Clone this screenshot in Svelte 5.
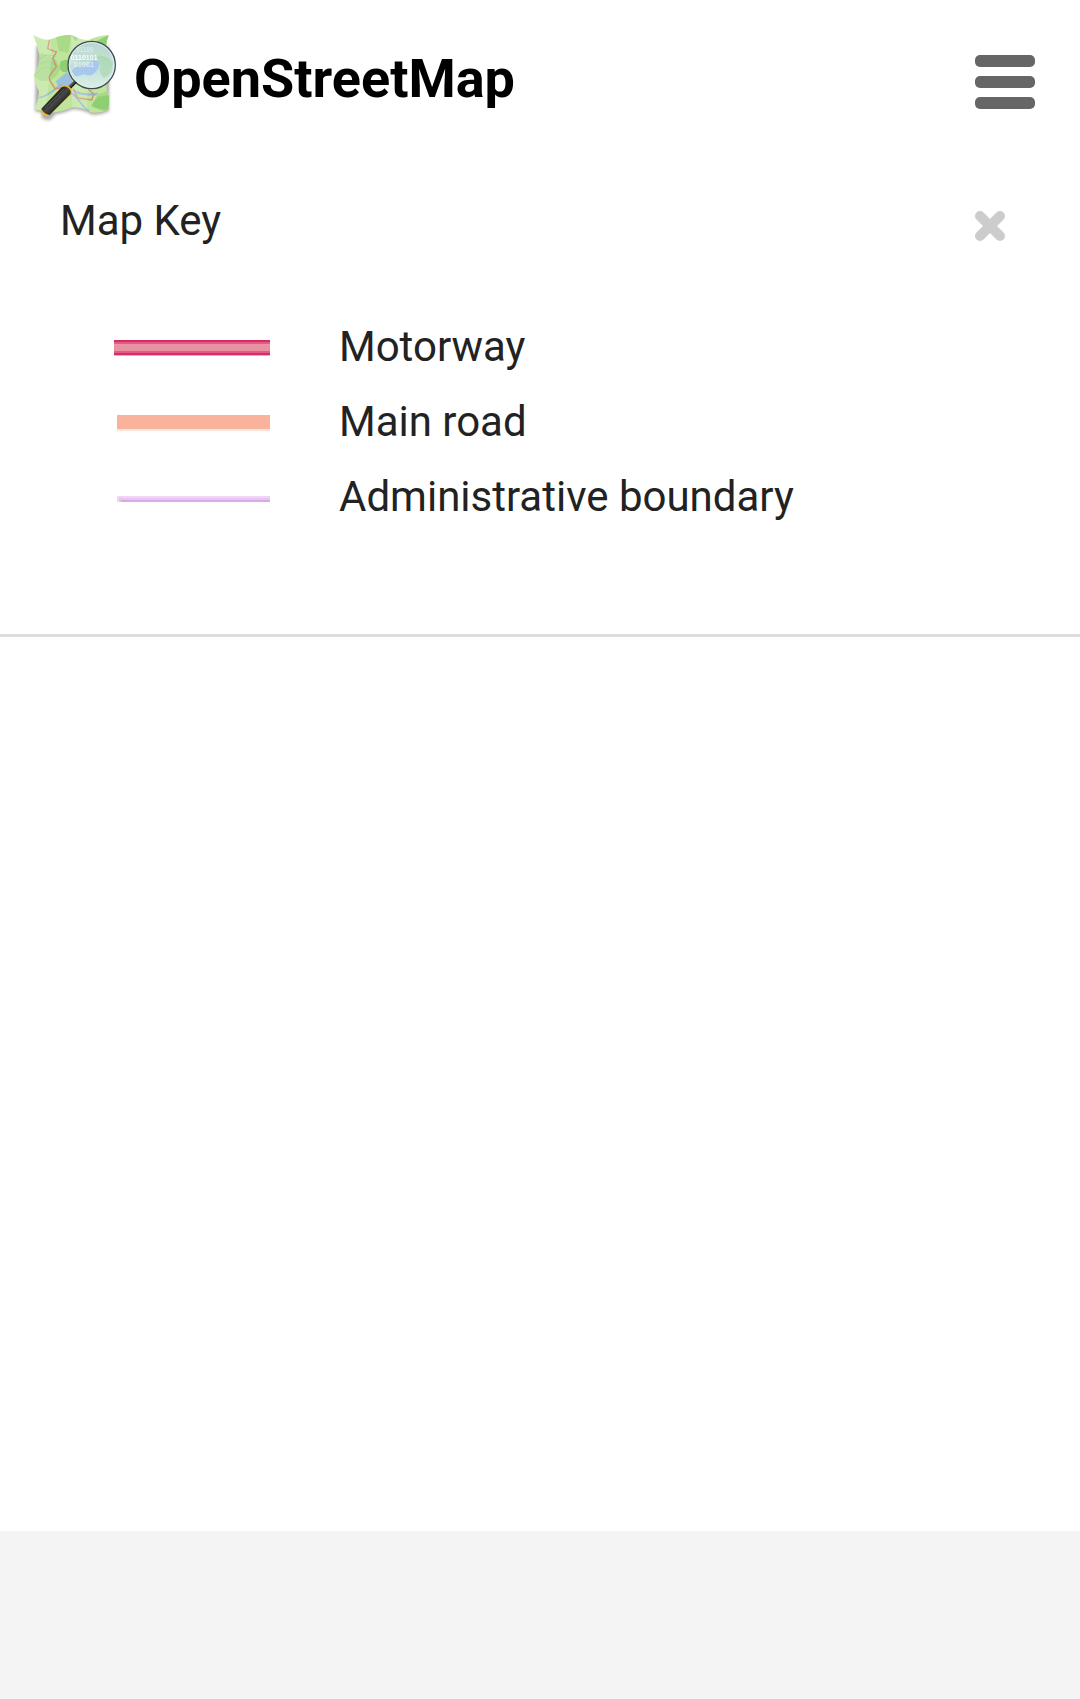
<script>
  const entries = [
    { label: 'Motorway', kind: 'motorway' },
    { label: 'Main road', kind: 'main' },
    { label: 'Administrative boundary', kind: 'admin' }
  ];
  let open = $state(true);
</script>

<div class="page">
  <header>
    <h1>
      <a href="/">
        <svg class="logo" viewBox="15 24 270 270" aria-hidden="true">
          <defs>
            <clipPath id="sheet">
              <path d="M25 27Q48 42 74 41Q104 27 138 26Q164 42 190 42Q220 28 251 28Q238 58 246 86Q256 120 252 144Q240 178 248 200Q258 224 248 252Q226 262 202 260Q172 244 144 244Q110 258 80 260Q54 256 27 250Q42 222 42 196Q28 168 28 146Q44 116 44 90Q38 58 25 27Z" />
            </clipPath>
            <linearGradient id="glass" x1="0" y1="0" x2="0" y2="1">
              <stop offset="0" stop-color="#a3c9c3" />
              <stop offset="0.5" stop-color="#bfdedb" />
              <stop offset="1" stop-color="#dcf0ea" />
            </linearGradient>
            <linearGradient id="grip" x1="0" y1="0" x2="1" y2="1">
              <stop offset="0.3" stop-color="#111" />
              <stop offset="0.5" stop-color="#484848" />
              <stop offset="0.7" stop-color="#1c1c1c" />
            </linearGradient>
            <filter id="soft" x="-20%" y="-20%" width="140%" height="140%">
              <feGaussianBlur stdDeviation="5" />
            </filter>
          </defs>
          <g filter="url(#soft)" fill="#666" opacity="0.55">
            <path d="M34 60L250 60Q262 120 252 150L252 256Q226 268 202 266Q172 250 144 250Q110 264 80 266L30 256Z" />
            <path d="M50 262L120 200L144 204L76 282Q62 284 50 276Z" />
          </g>
          <g clip-path="url(#sheet)" fill="none">
            <path fill="#bfe59c" d="M15 20H285V290H15Z" />
            <path fill="#a9da87" d="M27 90Q58 70 94 104Q118 132 82 160Q48 174 27 150ZM90 20L140 20L130 80L102 76ZM198 240L220 205L260 190V265Z" />
            <path fill="#8fcf74" d="M106 107Q130 92 138 116L132 136Q110 144 103 126ZM200 240Q210 208 252 208V252Q226 254 200 240ZM136 20H166L152 46ZM214 46L256 24L246 62Z" />
            <path stroke="#93cc7d" stroke-width="2" d="M38 110Q56 76 92 92M34 124Q60 94 94 118M36 140Q62 112 86 134M150 210Q180 190 224 214" />
            <path fill="#9cbfdc" d="M92 166L126 138L144 164L134 184L104 188Z" />
            <path stroke="#91b6d8" stroke-width="5" d="M42 216Q70 208 92 188L108 176M134 198Q154 210 168 232Q182 250 192 254M144 192Q180 214 218 202" />
            <path stroke="#d58d78" stroke-width="4" d="M74 38L68 68L94 78L84 96L94 122L72 152L74 162L90 188L124 184M144 188L158 216L200 222L206 204L190 190" />
            <path fill="#fff" opacity="0.2" d="M20 20H74L80 90L60 270H20ZM138 20H192L186 270H142Z" />
          </g>
          <circle cx="200" cy="117" r="71" fill="url(#glass)" opacity="0.95" />
          <path fill="#a9d9a8" d="M208 74Q250 84 262 112Q264 150 236 156Q220 140 226 116Z" opacity="0.6" />
          <path fill="#a5c8ec" d="M140 134Q160 110 184 120Q206 98 220 106Q228 124 208 142Q192 154 180 144Q160 152 150 150Z" />
          <g fill="#fff" font-family="Liberation Sans, Arial, sans-serif" font-weight="700">
            <text x="154" y="79" font-size="19" opacity="0.4">01100</text>
            <text x="137" y="102" font-size="21" opacity="0.9">0110101</text>
            <text x="146" y="124" font-size="22" opacity="0.6">01001</text>
          </g>
          <path fill="#fff" opacity="0.2" d="M134 118A66 66 0 0 1 266 108Q224 64 134 118Z" />
          <circle cx="200" cy="117" r="71" fill="none" stroke="#3f4b50" stroke-width="4" />
          <circle cx="200" cy="117" r="67" fill="none" stroke="#e5f1ef" stroke-width="3" opacity="0.8" />
          <path stroke="#555" stroke-width="10" d="M130 187L150 168" />
          <path stroke="#202020" stroke-width="5" d="M134 189L154 168" />
          <path fill="#f0b92c" d="M112 181Q124 174 134 183Q143 192 139 203L70 271Q52 271 46 254Z" />
          <path fill="url(#grip)" d="M110 184Q122 178 131 187Q140 195 136 205L74 267Q56 264 49 248Z" />
          <path stroke="#777" stroke-width="3" fill="none" d="M59 246L116 190" opacity="0.55" />
        </svg>
        <span>OpenStreetMap</span>
      </a>
    </h1>
    <button class="menu" type="button" aria-label="Menu">
      <svg viewBox="0 0 60 54" aria-hidden="true">
        <rect width="60" height="12" rx="5" />
        <rect y="21" width="60" height="12" rx="5" />
        <rect y="42" width="60" height="12" rx="5" />
      </svg>
    </button>
  </header>

  <main>
    {#if open}
      <section class="key" aria-labelledby="key-title">
        <div class="title">
          <h2 id="key-title">Map Key</h2>
          <button class="close" type="button" aria-label="Close" onclick={() => (open = false)}>
            <svg viewBox="0 0 30 30" aria-hidden="true">
              <path d="M5 5L25 25M25 5L5 25" />
            </svg>
          </button>
        </div>
        <table>
          <tbody>
            {#each entries as entry}
              <tr>
                <td class="swatch">
                  <svg viewBox="0 0 156 75" aria-hidden="true">
                    {#if entry.kind === 'motorway'}
                      <path fill="#dc2a67" d="M0 31H156V46H0Z" />
                      <path fill="#f3a9c1" d="M0 46H156V47H0Z" />
                      <path fill="#e15c85" d="M0 33H156V44H0Z" />
                      <path fill="#e892a2" d="M0 35H156V42H0Z" />
                    {:else if entry.kind === 'main'}
                      <path fill="#fde3da" d="M3 31H156V47H3Z" />
                      <path fill="#f9b29c" d="M3 31H156V45H3Z" />
                    {:else}
                      <path fill="#efd6f5" d="M3 37H156V43H3Z" />
                      <path fill="#e8c4f0" d="M5 39H156V43H5Z" />
                      <path fill="#dca9e8" d="M7 41H156V43H7Z" />
                    {/if}
                  </svg>
                </td>
                <td>{entry.label}</td>
              </tr>
            {/each}
          </tbody>
        </table>
      </section>
    {/if}
  </main>

  <footer></footer>
</div>

<style>
  :global(body) {
    margin: 0;
    background: #fff;
  }
  .page {
    display: flex;
    flex-direction: column;
    min-height: 100vh;
    color: #222;
    font: 42px/75px Roboto, sans-serif;
  }
  header {
    display: flex;
    align-items: center;
    justify-content: space-between;
    padding: 29px 30px 37px;
  }
  h1,
  h2 {
    margin: 0;
  }
  h1 {
    font-size: 54px;
    line-height: 99px;
  }
  h1 a {
    display: flex;
    align-items: center;
    gap: 14px;
    color: #000;
    text-decoration: none;
  }
  .logo {
    width: 90px;
    height: 90px;
  }
  button {
    display: flex;
    align-items: center;
    justify-content: center;
    padding: 15px;
    border: 0;
    background: none;
    cursor: pointer;
  }
  .menu {
    padding-top: 21px;
  }
  .menu svg {
    width: 60px;
    height: 54px;
    fill: #666;
  }
  main {
    flex: 1;
  }
  .key {
    padding: 31px 60px 100px;
    border-bottom: 3px solid #ddd;
  }
  .title {
    display: flex;
    align-items: flex-start;
    justify-content: space-between;
    margin-bottom: 53px;
  }
  h2 {
    font-size: 42px;
    font-weight: 400;
    line-height: 50px;
  }
  .close svg {
    width: 30px;
    height: 30px;
    fill: none;
    stroke: #ccc;
    stroke-width: 10px;
    stroke-linecap: round;
  }
  table {
    border-collapse: collapse;
  }
  td {
    padding: 0;
  }
  .swatch {
    padding: 0 69px 0 54px;
  }
  .swatch svg {
    display: block;
    width: 156px;
    height: 75px;
  }
  footer {
    height: 168px;
    background: #f4f4f4;
  }
</style>
